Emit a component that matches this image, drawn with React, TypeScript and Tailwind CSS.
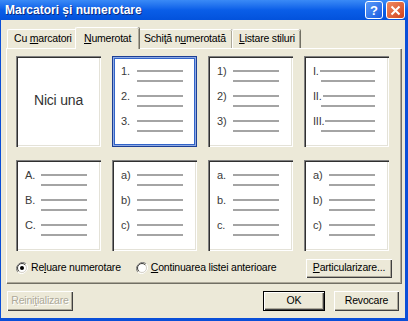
import React from 'react';

const font = "font-['Liberation_Sans',Arial,sans-serif]";

function Line({ className = 'w-[46px]' }: { className?: string }) {
  return <div className={`h-[2px] bg-[#a4a4a4] ${className}`} />;
}

function ListPreview({ labels, roman }: { labels: string[]; roman?: boolean }) {
  return (
    <div className="flex flex-col gap-[8px] pt-[9px] pl-[9px] text-[11px] leading-[12px] text-[#3a3a3a]">
      {labels.map((l) =>
        roman ? (
          <div key={l} className="flex w-[62px] flex-col">
            <div className="flex h-[12px] items-center gap-[1px]">
              <span>{l}</span>
              <Line className="flex-1" />
            </div>
            <Line className="mt-[3px] ml-[8px] w-[54px]" />
          </div>
        ) : (
          <div key={l} className="grid grid-cols-[16px_46px]">
            <div className="flex h-[12px] items-center">{l}</div>
            <div className="flex h-[12px] items-center">
              <Line />
            </div>
            <div />
            <Line className="mt-[3px] w-[46px]" />
          </div>
        )
      )}
    </div>
  );
}

function PreviewBox({
  labels,
  roman,
  selected,
  none,
}: {
  labels?: string[];
  roman?: boolean;
  selected?: boolean;
  none?: boolean;
}) {
  const frame = selected
    ? 'shadow-[inset_1px_1px_0_#1d3f94,inset_-1px_-1px_0_#1d3f94,inset_2px_2px_0_#8eaae4,inset_-2px_-2px_0_#8eaae4,inset_3px_3px_0_#3264c8,inset_-3px_-3px_0_#3264c8]'
    : 'shadow-[inset_1px_1px_0_#808080,inset_2px_2px_0_#303030,inset_-1px_-1px_0_#ffffff,inset_-2px_-2px_0_#e4e2d8]';
  return (
    <div className={`h-[91px] w-[85px] bg-white ${frame}`}>
      {none ? (
        <div className="flex h-full items-center justify-center pb-[2px] text-[14px] text-[#333]">Nici una</div>
      ) : (
        <ListPreview labels={labels!} roman={roman} />
      )}
    </div>
  );
}

function Btn({
  children,
  className = '',
  def,
  disabled,
}: {
  children: React.ReactNode;
  className?: string;
  def?: boolean;
  disabled?: boolean;
}) {
  return (
    <div
      className={`flex items-center justify-center whitespace-nowrap bg-[#ece9d8] ${
        disabled ? 'text-[#aca899] [text-shadow:1px_1px_0_#fff]' : 'text-black'
      } ${
        def
          ? 'border border-black shadow-[inset_1px_1px_0_#fff,inset_-1px_-1px_0_#404040,inset_-2px_-2px_0_#aca899]'
          : 'shadow-[inset_1px_1px_0_#fff,inset_-1px_-1px_0_#404040,inset_-2px_-2px_0_#aca899]'
      } ${className}`}
    >
      <span>{children}</span>
    </div>
  );
}

function Radio({ checked }: { checked?: boolean }) {
  return (
    <svg width="12" height="12" viewBox="0 0 12 12" className="shrink-0">
      <path d="M10.2 1.8A6 6 0 0 0 1.8 10.2" fill="none" stroke="#808080" />
      <path d="M1.8 10.2A6 6 0 0 0 10.2 1.8" fill="none" stroke="#fff" />
      <circle cx="6" cy="6" r="4.5" fill="#fff" stroke="#d4d0c8" />
      <path d="M9.2 2.8A4.5 4.5 0 0 0 2.8 9.2" fill="none" stroke="#404040" />
      {checked && <circle cx="6" cy="6" r="2" fill="#000" />}
    </svg>
  );
}

function Tab({ children, w, selected }: { children: React.ReactNode; w: string; selected?: boolean }) {
  return (
    <div
      className={`relative flex items-center whitespace-nowrap ${w} ${
        selected
          ? 'z-10 -mx-[2px] -mb-[1px] h-[22px] rounded-t-[2px] border-l border-t border-white bg-[#ece9d8] pl-[8px] shadow-[inset_-1px_0_0_#aca899,1px_0_0_#716f64]'
          : 'h-[19px] rounded-t-[2px] border-l border-t border-white pl-[6px] shadow-[inset_-1px_0_0_#aca899,1px_0_0_#716f64]'
      }`}
    >
      <span>{children}</span>
    </div>
  );
}

export default function App() {
  const rows = [
    [
      { none: true },
      { labels: ['1.', '2.', '3.'], selected: true },
      { labels: ['1)', '2)', '3)'] },
      { labels: ['I.', 'II.', 'III.'], roman: true },
    ],
    [
      { labels: ['A.', 'B.', 'C.'] },
      { labels: ['a)', 'b)', 'c)'] },
      { labels: ['a.', 'b.', 'c.'] },
      { labels: ['a)', 'b)', 'c)'] },
    ],
  ];

  return (
    <div className={`flex h-[321px] w-[408px] flex-col overflow-hidden bg-[#0a4fd8] ${font}`}>
      {/* title bar */}
      <div className="flex h-[20px] items-center bg-gradient-to-b from-[#3a8af6] via-[#0a5ee8] to-[#0352dc] pl-[5px] pr-[3px]">
        <span className="flex-1 text-[12px] font-bold text-white [text-shadow:1px_1px_0_#0a2a80]">
          Marcatori și numerotare
        </span>
        <div className="mr-[3px] flex h-[18px] w-[18px] items-center justify-center rounded-[3px] border border-white bg-gradient-to-br from-[#5a9af8] to-[#1a5ae0] text-[13px] font-bold leading-none text-white">
          ?
        </div>
        <div className="flex h-[18px] w-[19px] items-center justify-center rounded-[3px] border border-white bg-gradient-to-br from-[#f08a60] to-[#d0401a]">
          <svg width="11" height="11" viewBox="0 0 11 11">
            <path d="M1.5 1.5l8 8M9.5 1.5l-8 8" stroke="#fff" strokeWidth="2" />
          </svg>
        </div>
      </div>

      {/* body */}
      <div className="mb-[3px] ml-[1px] mr-[3px] flex flex-1 flex-col bg-[#ece9d8] text-[10.5px] tracking-[-0.2px] text-black">
        <div className="flex items-end pl-[6px] pt-[7px]">
          <Tab w="w-[70px]">
            Cu <u>m</u>arcatori
          </Tab>
          <Tab w="w-[64px]" selected>
            <u>N</u>umerotat
          </Tab>
          <Tab w="w-[95px]">
            Schiţă n<u>u</u>merotată
          </Tab>
          <Tab w="w-[68px]">
            <u>L</u>istare stiluri
          </Tab>
        </div>

        {/* panel */}
        <div className="ml-[5px] mr-[4px] flex h-[235px] flex-col border-l border-t border-white pl-[9px] pt-[7px] shadow-[inset_-1px_-1px_0_#aca899,1px_1px_0_#716f64]">
          <div className="grid grid-cols-[repeat(4,85px)] gap-x-[11px] gap-y-[13px]">
            {rows.flat().map((b, i) => (
              <PreviewBox key={i} {...b} />
            ))}
          </div>
          <div className="mt-[8px] flex h-[18px] items-center whitespace-nowrap">
            <Radio checked />
            <span className="ml-[3px]">
              Re<u>l</u>uare numerotare
            </span>
            <span className="ml-[15px] flex">
              <Radio />
            </span>
            <span className="ml-[3px]">
              <u>C</u>ontinuarea listei anterioare
            </span>
            <Btn className="ml-auto mr-[9px] h-[19px] w-[86px]">
              <u>P</u>articularizare...
            </Btn>
          </div>
        </div>

        <div className="mt-[8px] flex items-center px-[6px]">
          <Btn disabled className="h-[20px] w-[66px]">
            Reini<u>ţ</u>ializare
          </Btn>
          <Btn def className="ml-auto h-[20px] w-[62px]">
            OK
          </Btn>
          <Btn className="ml-[9px] h-[20px] w-[65px]">Revocare</Btn>
        </div>
      </div>
    </div>
  );
}
